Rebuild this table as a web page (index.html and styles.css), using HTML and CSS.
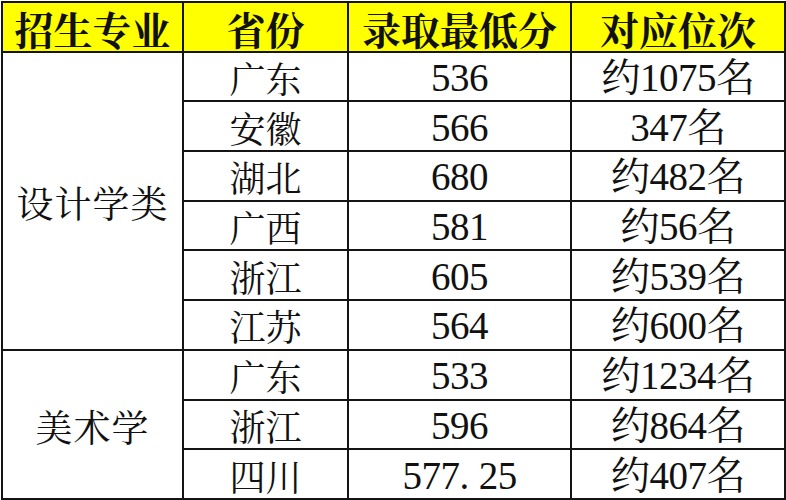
FILE: index.html
```html
<!DOCTYPE html>
<html lang="zh-CN">
<head>
<meta charset="utf-8">
<title>录取最低分</title>
<link rel="stylesheet" href="styles.css">
</head>
<body>
<table class="score-table">
  <colgroup>
    <col class="c-major">
    <col class="c-prov">
    <col class="c-score">
    <col class="c-rank">
  </colgroup>
  <thead>
    <tr>
      <th>招生专业</th>
      <th>省份</th>
      <th>录取最低分</th>
      <th>对应位次</th>
    </tr>
  </thead>
  <tbody>
    <tr><td class="major" rowspan="6">设计学类</td><td>广东</td><td class="num">536</td><td class="num">约1075名</td></tr>
    <tr><td>安徽</td><td class="num">566</td><td class="num">347名</td></tr>
    <tr><td>湖北</td><td class="num">680</td><td class="num">约482名</td></tr>
    <tr><td>广西</td><td class="num">581</td><td class="num">约56名</td></tr>
    <tr><td>浙江</td><td class="num">605</td><td class="num">约539名</td></tr>
    <tr><td>江苏</td><td class="num">564</td><td class="num">约600名</td></tr>
    <tr><td class="major" rowspan="3">美术学</td><td>广东</td><td class="num">533</td><td class="num">约1234名</td></tr>
    <tr><td>浙江</td><td class="num">596</td><td class="num">约864名</td></tr>
    <tr><td>四川</td><td class="num">577<span class="dot">.</span>25</td><td class="num">约407名</td></tr>
  </tbody>
</table>
</body>
</html>
```

FILE: styles.css
```css
html, body {
  margin: 0;
  padding: 0;
  background: #ffffff;
}

body {
  padding: 1px;
}

.score-table {
  border-collapse: collapse;
  table-layout: fixed;
  width: 783px;
  height: 497px;
  color: #111111;
}

.c-major { width: 181px; }
.c-prov { width: 165px; }
.c-score { width: 223px; }
.c-rank { width: 214px; }

.score-table tr {
  height: 49.7px;
}

.score-table th,
.score-table td {
  border: 2px solid #141414;
  padding: 0;
  text-align: center;
  vertical-align: middle;
  line-height: 40px;
  height: 40px;
}

.score-table th {
  background: #ffff00;
  font-family: "Noto Serif CJK SC", "Noto Sans CJK SC", sans-serif;
  font-weight: 700;
  font-size: 39px;
  padding-top: 3px;
}

.score-table td {
  font-family: "Noto Serif CJK SC", "Noto Sans CJK SC", sans-serif;
  font-weight: 400;
  font-size: 36px;
  padding-top: 3px;
}

.score-table td.num {
  font-family: "Liberation Serif", "DejaVu Serif", "Noto Serif CJK SC", "Noto Sans CJK SC", serif;
  font-size: 39px;
  letter-spacing: -0.5px;
}

.score-table td.major {
  font-size: 37px;
  letter-spacing: 1px;
}

.dot {
  padding-right: 10px;
}
```
